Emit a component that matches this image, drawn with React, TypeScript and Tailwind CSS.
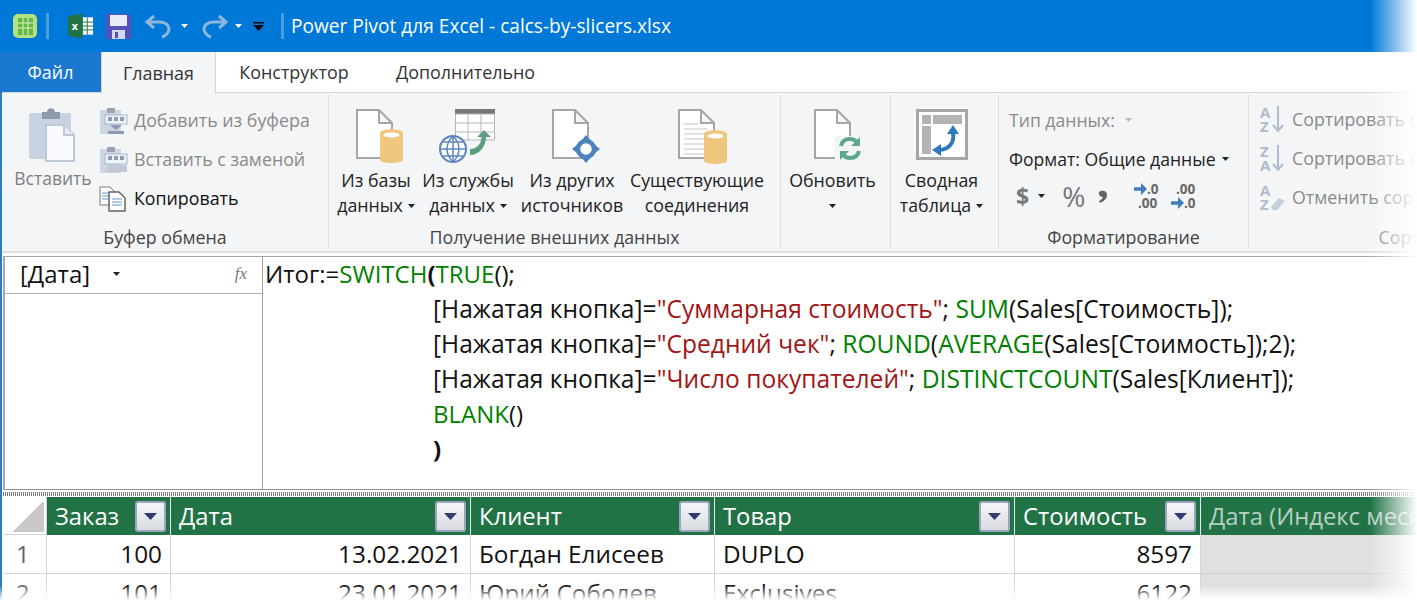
import type { ReactNode } from 'react';

const font = { fontFamily: '"Open Sans", "Noto Sans", sans-serif' };

function Caret({ color = '#222' }: { color?: string }) {
  return (
    <svg width="7" height="4" viewBox="0 0 7 4" className="inline-block shrink-0">
      <path d="M0 0h7L3.500 4z" fill={color} />
    </svg>
  );
}

function Doc({ x = 0, y = 0, w = 37, h = 50 }: { x?: number; y?: number; w?: number; h?: number }) {
  const f = 14;
  return (
    <path
      d={`M${x + 1} ${y + 1}H${x + w - f}L${x + w - 1} ${y + f}V${y + h - 1}H${x + 1}Z M${x + w - f} ${y + 1}V${y + f}H${x + w - 1}`}
      fill="#fff"
      stroke="#a6a6a6"
      strokeWidth="2"
    />
  );
}

function Cylinder({ x, y }: { x: number; y: number }) {
  return (
    <g>
      <path d={`M${x} ${y + 4}c0-5 23-5 23 0v27c0 4-23 4-23 0z`} fill="#efc67e" />
      <ellipse cx={x + 11.500} cy={y + 6} rx="8" ry="2.500" fill="#fff" />
    </g>
  );
}

function BigIcon({ children, width = 50 }: { children: ReactNode; width?: number }) {
  return (
    <svg width={width} height="56" viewBox={`0 0 ${width} 56`} className="shrink-0">
      {children}
    </svg>
  );
}

function BigButton({
  width,
  icon,
  lines,
  caret,
  className = '',
  iconClass = '',
}: {
  width: string;
  icon: ReactNode;
  lines: string[];
  caret?: boolean;
  className?: string;
  iconClass?: string;
}) {
  return (
    <div className={`${width} ${className} flex flex-col items-center pt-[14px] text-[17.800px] leading-[25px] whitespace-nowrap text-[#222]`}>
      <div className={`flex h-[59px] items-start justify-center ${iconClass}`}>{icon}</div>
      <div className="text-center">{lines[0]}</div>
      <div className="flex h-[25px] items-center justify-center gap-[5px]">
        {lines[1]}
        {caret && <Caret />}
      </div>
    </div>
  );
}

function Group({ width, label, labelColor = '#444', children }: { width: string; label: string; labelColor?: string; children: ReactNode }) {
  return (
    <div className={`${width} flex h-[153px] shrink-0 flex-col border-r border-[#dcdee2]`}>
      <div className="flex h-[131px] min-h-0">{children}</div>
      <div className="text-center text-[17.800px] leading-[22px] whitespace-nowrap" style={{ color: labelColor }}>
        {label}
      </div>
    </div>
  );
}

function ClipSmall({ variant }: { variant: 'add' | 'replace' }) {
  return (
    <svg width="29" height="28" viewBox="0 0 29 28" className="shrink-0">
      <rect x="1" y="3" width="21" height="24" fill="#cdd5e3" />
      <rect x="8" y="1" width="8" height="5" fill="#9aa3b2" />
      <rect x="6" y="8" width="22" height={variant === 'add' ? 9 : 10} fill="#eef1f6" stroke="#aeb7c7" />
      <rect x="9" y="10" width="4" height="4" fill="#8f9bb0" />
      <rect x="15" y="10" width="4" height="4" fill="#8f9bb0" />
      <rect x="21" y="10" width="4" height="4" fill="#8f9bb0" />
      {variant === 'add' ? (
        <path d="M11 18h12l-6 5z M9 24h16v3H9z" fill="#8f9bb0" />
      ) : (
        <path d="M8 19h20v7H8z M10 21h4v3h-4z" fill="#c2cad8" />
      )}
    </svg>
  );
}

function CopySmall() {
  return (
    <svg width="28" height="26" viewBox="0 0 28 26" className="shrink-0">
      <path d="M1 1h10l4 4v14H1z" fill="#fff" stroke="#777" />
      <path d="M3 7h9M3 10h9M3 13h9" stroke="#5b9bd5" />
      <path d="M10 6h10l6 6v13H10z" fill="#fff" stroke="#666" strokeWidth="1.500" />
      <path d="M13 13h10M13 16h10M13 19h10" stroke="#5b9bd5" />
    </svg>
  );
}

function SortIcon({ top, bottom, eraser }: { top: string; bottom: string; eraser?: boolean }) {
  return (
    <svg width="26" height="29" viewBox="0 0 26 29" className="shrink-0">
      <text x="0" y="13" fontSize="15" fontWeight="700" fill="#b0bbce" fontFamily="Open Sans">{top}</text>
      <text x="0" y="27" fontSize="15" fontWeight="700" fill="#b0bbce" fontFamily="Open Sans">{bottom}</text>
      {eraser ? (
        <path d="M11 24l8-9 6 3-8 9h-4z" fill="#c4cfe0" />
      ) : (
        <path d="M18 1v24M13 20l5 6 5-6" fill="none" stroke="#aebcd2" strokeWidth="2" />
      )}
    </svg>
  );
}

function FilterButton() {
  return (
    <div className="flex h-[31px] w-[31px] shrink-0 items-center justify-center rounded-[3px] border-2 border-[#9aa5c0] bg-gradient-to-b from-[#f6f7f9] to-[#d8dbe1]">
      <svg width="13" height="7" viewBox="0 0 13 7">
        <path d="M0 0h13L6.500 7z" fill="#323a70" />
      </svg>
    </div>
  );
}

function HeaderCell({ label }: { label: string }) {
  return (
    <div className="flex items-center justify-between border-r border-[#e6eee9] bg-[#217346] pr-[4px] pl-[8px] text-[#fff]">
      <span className="whitespace-nowrap">{label}</span>
      <FilterButton />
    </div>
  );
}

function Cell({ children, right }: { children: ReactNode; right?: boolean }) {
  return (
    <div className={`border-r border-b border-[#d4d4d4] px-[8px] text-[24.300px] whitespace-nowrap text-[#111] ${right ? 'text-right' : ''}`}>
      {children}
    </div>
  );
}

const Fn = ({ children }: { children: ReactNode }) => <span className="text-[#008000]">{children}</span>;
const Str = ({ children }: { children: ReactNode }) => <span className="text-[#a31515]">{children}</span>;

const rows = [
  ['1', '100', '13.02.2021', 'Богдан Елисеев', 'DUPLO', '8597'],
  ['2', '101', '23.01.2021', 'Юрий Соболев', 'Exclusives', '6122'],
];

export default function App() {
  return (
    <div className="relative h-[607px] w-[1417px] overflow-hidden bg-white" style={font}>
      {/* title bar */}
      <div className="flex h-[52px] items-center bg-[#0078d7] pl-[12px] text-white">
        <svg width="26" height="28" viewBox="0 0 26 28" className="shrink-0">
          <rect x="1" y="2" width="24" height="24" rx="5" fill="#b5e27f" />
          <path d="M6 6h15v17H6z" fill="#66b84a" />
          <path d="M6 11h15M6 16h15M11 6v17M16 6v17" stroke="#d9f3c0" />
        </svg>
        <div className="mx-[8px] h-[26px] w-[3px] bg-[#4a9fe2]" />
        <svg width="26" height="26" viewBox="0 0 27 26" className="ml-[11px] shrink-0">
          <rect x="11" y="4" width="15" height="18" fill="#fff" />
          <path d="M15 4v18M20 4v18M11 9h15M11 13h15M11 17h15" stroke="#217346" />
          <path d="M0 3l15-3v26L0 23z" fill="#217346" />
          <text x="4" y="17" fontSize="11" fontWeight="700" fill="#fff" fontFamily="Open Sans">x</text>
        </svg>
        <svg width="27" height="27" viewBox="0 0 27 27" className="ml-[11px] shrink-0">
          <path d="M1 1h22l3 3v22H1z" fill="#5454b8" />
          <rect x="5" y="2" width="17" height="11" fill="#e9ebf7" />
          <rect x="7" y="17" width="13" height="9" fill="#d4d7ee" />
          <rect x="10" y="19" width="3" height="6" fill="#5454b8" />
        </svg>
        <svg width="30" height="26" viewBox="0 0 30 26" className="ml-[12px] shrink-0">
          <path d="M10 3L3 9l7 6M3 9h13c6 0 9 4 9 7s-3 7-7 8" fill="none" stroke="#8db7dc" strokeWidth="3" />
        </svg>
        <div className="mx-[7px] flex"><Caret color="#fff" /></div>
        <svg width="30" height="26" viewBox="0 0 30 26" className="ml-[4px] shrink-0">
          <path d="M20 3l7 6-7 6M27 9H14c-6 0-9 4-9 7s3 7 7 8" fill="none" stroke="#8db7dc" strokeWidth="3" />
        </svg>
        <div className="mx-[6px] flex"><Caret color="#fff" /></div>
        <svg width="11" height="9" viewBox="0 0 11 9" className="ml-[5px] shrink-0">
          <path d="M0 0h11v1.500H0z M0 3h11L5.500 9z" fill="#0a0a0a" />
        </svg>
        <div className="mr-[7px] ml-[17px] h-[26px] w-[3px] bg-[#4a9fe2]" />
        <span className="text-[19.100px] whitespace-nowrap">Power Pivot для Excel - calcs-by-slicers.xlsx</span>
      </div>

      <div className="border-l-2 border-[#2b7cc0]">
        {/* tabs */}
        <div className="flex h-[41px] items-stretch border-b-[1.500px] border-[#d5d6d8] text-[17.900px] text-[#333]">
          <div className="-ml-[2px] flex w-[101px] items-center justify-center bg-[#1a78d0] text-white">Файл</div>
          <div className="-mb-[2px] flex w-[115px] items-center justify-center border-x border-[#d5d6d8] bg-[#f4f5f7]">Главная</div>
          <div className="flex w-[156px] items-center justify-center">Конструктор</div>
          <div className="flex items-center pl-[24px]">Дополнительно</div>
        </div>

        {/* ribbon */}
        <div className="flex h-[160px] border-b-2 border-[#dfe0e2] bg-[#f4f5f7] pt-[2px]">
          <Group width="w-[327px]" label="Буфер обмена">
            <div className="flex w-[97px] flex-col items-center pt-[12px] text-[17.500px] text-[#7e7e7e]">
              <svg width="50" height="56" viewBox="0 0 50 56" className="ml-[4px] shrink-0">
                <rect x="1" y="6" width="42" height="46" rx="2" fill="#c9d2e1" />
                <path d="M14 5h5c0-5 8-5 8 0h5v7H14z" fill="#8f9aac" />
                <path d="M18 18h18l10 10v26H18z" fill="#f9fafc" stroke="#bcc7d8" strokeWidth="2" />
                <path d="M36 18v10h10" fill="#e5e9f0" stroke="#bcc7d8" strokeWidth="2" />
              </svg>
              <span className="mt-[2px] ml-[5px]">Вставить</span>
            </div>
            <div className="flex flex-col pt-[6px] text-[17.800px] leading-[39px] whitespace-nowrap">
              <div className="flex h-[39px] items-center gap-[6px] text-[#8a8a8a]"><ClipSmall variant="add" />Добавить из буфера</div>
              <div className="flex h-[39px] items-center gap-[6px] text-[#8a8a8a]"><ClipSmall variant="replace" />Вставить с заменой</div>
              <div className="flex h-[39px] items-center gap-[7px] text-[#111]"><CopySmall />Копировать</div>
            </div>
          </Group>

          <Group width="w-[452px]" label="Получение внешних данных">
            <BigButton
              width="w-[94px]"
              caret
              iconClass="ml-[6px]"
              lines={['Из базы', 'данных']}
              icon={
                <BigIcon width={47}>
                  <Doc />
                  <Cylinder x={24} y={20} />
                </BigIcon>
              }
            />
            <BigButton
              width="w-[90px]"
              caret
              lines={['Из службы', 'данных']}
              icon={
                <BigIcon width={58}>
                  <rect x="16" y="0" width="40" height="5" fill="#777" />
                  <path d="M16.500 5h39v26h-39z M16 14h40M16 23h40M29 5v27M42 5v27" fill="#fff" stroke="#b5b5b5" />
                  <circle cx="14" cy="40" r="13" fill="#fff" stroke="#5d86bd" strokeWidth="2" />
                  <path d="M1 40h26M4 33h20M4 47h20M14 27v26M14 27c-8 8-8 18 0 26M14 27c8 8 8 18 0 26" fill="none" stroke="#5d86bd" strokeWidth="1.500" />
                  <path d="M31 40c6 0 11-4 12-12h-5l7-7 7 7h-5c0 10-7 18-16 18z" fill="#5c9e82" />
                </BigIcon>
              }
            />
            <BigButton
              width="w-[106px]"
              className="mr-[5px] ml-[6px]"
              iconClass="ml-[10px]"
              lines={['Из других', 'источников']}
              icon={
                <BigIcon>
                  <Doc />
                  <circle cx="34" cy="40" r="8" fill="#fff" stroke="#4d83bd" strokeWidth="4.500" />
                  <path d="M34 26l5 6h-10z M34 54l5-6h-10z M20 40l6-5v10z M48 40l-6-5v10z" fill="#4d83bd" />
                </BigIcon>
              }
            />
            <BigButton
              width="w-[134px]"
              iconClass="ml-[12px]"
              lines={['Существующие', 'соединения']}
              icon={
                <BigIcon>
                  <Doc />
                  <path d="M6 15h14M6 20h24M6 25h24M6 30h24M6 35h24M6 40h24M6 45h24" stroke="#c4c4c4" />
                  <Cylinder x={26} y={21} />
                </BigIcon>
              }
            />
          </Group>

          <Group width="w-[110px]" label="">
            <BigButton
              width="w-[103px]"
              iconClass="ml-[9px]"
              lines={['Обновить', '']}
              caret
              icon={
                <BigIcon width={47}>
                  <Doc />
                  <rect x="21" y="27" width="26" height="26" fill="#f4f5f7" />
                  <path d="M27 37c1-5 5-7 9-7 3 0 5 1 7 3" fill="none" stroke="#5fa98a" strokeWidth="4" />
                  <path d="M46 28v9h-9z" fill="#5fa98a" />
                  <path d="M45 42c-1 5-5 7-9 7-3 0-5-1-7-3" fill="none" stroke="#5fa98a" strokeWidth="4" />
                  <path d="M26 51v-9h9z" fill="#5fa98a" />
                </BigIcon>
              }
            />
          </Group>

          <Group width="w-[108px]" label="">
            <BigButton
              width="w-[101px]"
              caret
              lines={['Сводная', 'таблица']}
              icon={
                <BigIcon width={52}>
                  <rect x="1.500" y="1.500" width="49" height="48" fill="#fff" stroke="#a6a6a6" strokeWidth="3" />
                  <rect x="6" y="6" width="9" height="9" fill="#b3b3b3" />
                  <rect x="17" y="6" width="29" height="9" fill="#b3b3b3" />
                  <rect x="6" y="17" width="9" height="28" fill="#b3b3b3" />
                  <path d="M37 24c2 10-5 17-14 17" fill="none" stroke="#2f78bf" strokeWidth="4" />
                  <path d="M37 16l-6 9h12z M16 41l9-6v12z" fill="#2f78bf" />
                </BigIcon>
              }
            />
          </Group>

          <Group width="w-[250px]" label="Форматирование">
            <div className="flex flex-col pt-[11px] pl-[10px] text-[17.600px] whitespace-nowrap">
              <div className="flex h-[28px] items-center gap-[10px] text-[#8a8a8a]">Тип данных:<Caret color="#bbb" /></div>
              <div className="mt-[11px] flex h-[28px] items-center gap-[6px] text-[#222]">Формат: Общие данные<Caret /></div>
              <div className="mt-[9px] flex h-[28px] items-center text-[#777]">
                <span className="ml-[7px] text-[23px] font-bold">$</span>
                <span className="mr-[17px] ml-[9px] flex"><Caret /></span>
                <span className="text-[28px] leading-none">%</span>
                <svg width="10" height="13" viewBox="0 0 10 13" className="ml-[13px]">
                  <path d="M1 2c2-2 8-2 8 3 0 4-3 6-7 8l-1-2c2-1 3-2 4-4-2 0-5-2-4-5z" fill="#666" />
                </svg>
                <svg width="30" height="28" viewBox="0 0 30 28" className="ml-[25px] shrink-0">
                  <path d="M1 7h8" stroke="#3f7cb8" strokeWidth="3.500" />
                  <path d="M8 1l6 6-6 6z" fill="#3f7cb8" />
                  <text x="14" y="12" fontSize="13.500" fontWeight="700" fill="#666" fontFamily="Open Sans">.0</text>
                  <text x="5" y="26" fontSize="13.500" fontWeight="700" fill="#666" fontFamily="Open Sans">.00</text>
                </svg>
                <svg width="30" height="28" viewBox="0 0 30 28" className="ml-[7px] shrink-0">
                  <text x="6" y="12" fontSize="13.500" fontWeight="700" fill="#666" fontFamily="Open Sans">.00</text>
                  <path d="M1 21h8" stroke="#3f7cb8" strokeWidth="3.500" />
                  <path d="M8 15l6 6-6 6z" fill="#3f7cb8" />
                  <text x="14" y="26" fontSize="13.500" fontWeight="700" fill="#666" fontFamily="Open Sans">.0</text>
                </svg>
              </div>
            </div>
          </Group>

          <Group width="w-[490px]" label="Сортировка и фильтрация" labelColor="#888">
            <div className="flex flex-col pt-[5px] pl-[11px] text-[17.800px] whitespace-nowrap text-[#8a8a8a]">
              <div className="flex h-[39px] items-center gap-[6px]"><SortIcon top="A" bottom="Z" />Сортировать от А до Я</div>
              <div className="flex h-[39px] items-center gap-[6px]"><SortIcon top="Z" bottom="A" />Сортировать от Я до А</div>
              <div className="flex h-[39px] items-center gap-[6px]"><SortIcon top="A" bottom="Z" eraser />Отменить сортировку</div>
            </div>
          </Group>
        </div>

        {/* formula area */}
        <div className="mt-[3px] ml-[1px] flex h-[234px] border-t border-b border-l-2 border-[#a8a8a8] border-b-[#8f8f8f]">
          <div className="w-[258px] shrink-0 border-r border-[#a0a0a0]">
            <div className="flex h-[37px] items-center justify-between border-b border-[#b0b0b0] pr-[15px] pb-[2px] pl-[15px]">
              <div className="flex items-center gap-[23px] text-[24px] text-[#111]">
                [Дата]
                <Caret />
              </div>
              <span className="text-[17px] text-[#777] italic" style={{ fontFamily: '"Liberation Serif", serif' }}>fx</span>
            </div>
          </div>
          <div className="-mt-[1px] pl-[2px] text-[24px] leading-[35px] whitespace-nowrap text-[#111]">
            <div>Итог:=<Fn>SWITCH</Fn><b>(</b><Fn>TRUE</Fn>();</div>
            <div className="pl-[168px] text-[24.600px]">[Нажатая кнопка]=<Str>"Суммарная стоимость"</Str>; <Fn>SUM</Fn>(Sales[Стоимость]);</div>
            <div className="pl-[168px] text-[24.600px]">[Нажатая кнопка]=<Str>"Средний чек"</Str>; <Fn>ROUND</Fn>(<Fn>AVERAGE</Fn>(Sales[Стоимость]);2);</div>
            <div className="pl-[168px] text-[24.600px]">[Нажатая кнопка]=<Str>"Число покупателей"</Str>; <Fn>DISTINCTCOUNT</Fn>(Sales[Клиент]);</div>
            <div className="pl-[168px]"><Fn>BLANK</Fn>()</div>
            <div className="pl-[168px] font-bold">)</div>
          </div>
        </div>

        {/* splitter */}
        <div className="ml-[1px] h-[7px] py-[1.500px]">
          <div className="h-full bg-[repeating-linear-gradient(90deg,#777_0,#777_1px,#fff_1px,#fff_2px)]" />
        </div>

        {/* table */}
        <div className="ml-[2px] grid grid-cols-[43px_124px_300px_244px_300px_186px_1fr] grid-rows-[38px_39px_39px] text-[23.800px] leading-[38px]">
          <div className="flex items-end justify-end border-r border-b border-[#d4d4d4] p-[2px]">
            <div className="h-[30px] w-[33px] bg-[linear-gradient(135deg,transparent_50%,#c8c8c8_50%)]" />
          </div>
          <HeaderCell label="Заказ" />
          <HeaderCell label="Дата" />
          <HeaderCell label="Клиент" />
          <HeaderCell label="Товар" />
          <HeaderCell label="Стоимость" />
          <div className="flex items-center bg-[#217346] pl-[8px] whitespace-nowrap text-[#b9cfc3]">Дата (Индекс месяца)</div>
          {rows.map((row) => (
            <div key={row[0]} className="contents">
              <div className="border-r border-b border-[#d4d4d4] pl-[12px] text-[#666]">{row[0]}</div>
              <Cell right>{row[1]}</Cell>
              <Cell right>{row[2]}</Cell>
              <Cell>{row[3]}</Cell>
              <Cell>{row[4]}</Cell>
              <Cell right>{row[5]}</Cell>
              <div className="border-b border-[#d0d0d0] bg-[#e0e0e0]" />
            </div>
          ))}
        </div>
      </div>

      {/* torn-off fade at the screenshot edges */}
      <div className="absolute top-0 right-0 bottom-0 w-[47px] bg-gradient-to-r from-transparent to-white" />
      <div className="absolute right-0 bottom-0 left-0 h-[22px] bg-gradient-to-b from-transparent to-white to-70%" />
    </div>
  );
}
